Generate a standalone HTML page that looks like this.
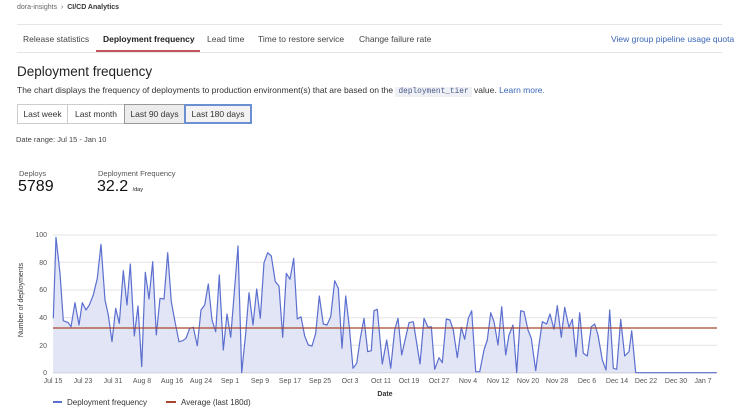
<!DOCTYPE html>
<html><head><meta charset="utf-8"><style>
*{margin:0;padding:0;box-sizing:border-box}
body{width:748px;height:417px;background:#fff;font-family:"Liberation Sans",sans-serif;color:#333;position:relative;overflow:hidden}
.a{position:absolute;white-space:nowrap}
.btn{position:absolute;top:104px;height:20px;border:1px solid #ccc;font-size:8.5px;line-height:18px;text-align:center;background:#fff;color:#333}
</style></head><body>
<div class="a" style="left:17px;top:4px;font-size:7px;color:#666">dora-insights &nbsp;›&nbsp; <b style="color:#333">CI/CD Analytics</b></div>
<div class="a" style="left:17px;top:24px;width:705px;border-top:1px solid #e5e5e5"></div>
<div class="a" style="left:17px;top:52px;width:705px;border-top:1px solid #e5e5e5"></div>
<div class="a" style="left:96px;top:50px;width:104px;height:2px;background:#c2565a"></div>
<div class="a" style="left:23px;top:34px;font-size:8.5px;color:#444">Release statistics</div>
<div class="a" style="left:103px;top:34px;font-size:8.5px;color:#222;font-weight:bold">Deployment frequency</div>
<div class="a" style="left:207px;top:34px;font-size:8.5px;color:#444">Lead time</div>
<div class="a" style="left:258px;top:34px;font-size:8.5px;color:#444">Time to restore service</div>
<div class="a" style="left:359px;top:34px;font-size:8.5px;color:#444">Change failure rate</div>
<div class="a" style="left:611px;top:34px;font-size:8.5px;color:#3a66b8">View group pipeline usage quota</div>
<div class="a" style="left:17px;top:64px;font-size:13.5px;color:#222">Deployment frequency</div>
<div class="a" style="left:17px;top:85px;font-size:8.5px;color:#333">The chart displays the frequency of deployments to production environment(s) that are based on the <span style="font-family:'Liberation Mono',monospace;background:#eef0f5;color:#4a5a8a;padding:1px 3px;font-size:7.8px">deployment_tier</span> value. <span style="color:#3a66b8">Learn more.</span></div>
<div class="btn" style="left:17px;width:51px">Last week</div>
<div class="btn" style="left:67px;width:58px">Last month</div>
<div class="btn" style="left:124px;width:61px;background:#ececec;border-color:#999">Last 90 days</div>
<div class="btn" style="left:184px;width:68px;border:2px solid #6b8fd0;background:#f3f3f3;line-height:16px">Last 180 days</div>
<div class="a" style="left:16px;top:135px;font-size:7.5px;color:#444">Date range: Jul 15 - Jan 10</div>
<div class="a" style="left:19px;top:169px;font-size:7.5px;color:#555">Deploys</div>
<div class="a" style="left:18px;top:178px;font-size:16px;color:#111">5789</div>
<div class="a" style="left:98px;top:169px;font-size:7.5px;color:#555">Deployment Frequency</div>
<div class="a" style="left:97px;top:178px;font-size:16px;color:#111">32.2 <span style="font-size:5.5px">/day</span></div>
<svg class="a" style="left:0;top:0" width="748" height="417">
<g stroke="#e3e3e3" stroke-width="1">
<line x1="53" x2="717" y1="235" y2="235"/><line x1="53" x2="717" y1="262.3" y2="262.3"/><line x1="53" x2="717" y1="290" y2="290"/><line x1="53" x2="717" y1="317.7" y2="317.7"/><line x1="53" x2="717" y1="345.3" y2="345.3"/><line x1="53" x2="717" y1="372.7" y2="372.7" stroke="#bbb"/>
</g>
<g font-size="7" fill="#555" text-anchor="end" font-family="Liberation Sans">
<text x="47" y="237">100</text><text x="47" y="265">80</text><text x="47" y="292">60</text><text x="47" y="320">40</text><text x="47" y="348">20</text><text x="47" y="375">0</text>
</g>
<text transform="translate(23,300) rotate(-90)" font-size="7" fill="#333" text-anchor="middle" font-family="Liberation Sans">Number of deployments</text>
<polygon fill="#dfe2f5" fill-opacity="0.9" points="53,372.7 53.3,318.3 56,237.3 60,273.3 63.3,320.7 68.3,322.7 71,326.7 75,302.7 79,325 82.3,302.7 86,310 89.3,305 93.3,295 97.3,278.3 101,244.3 105,300 108.3,315 112,341.7 115.7,308.3 119.3,323.3 123.3,270.7 127,305 130.3,264 134.3,336 138,306 141.7,366.7 145.3,272.3 149,299 152.7,261.7 156.3,335 160,298.3 164,299 167.7,252.7 171.3,301.7 175,321.7 179,341.7 182.7,340.7 186,338.3 189.7,328.3 193.3,327.3 197.3,345.7 201,310 204.7,305 208.3,284 212,320 215.7,331.7 219.3,275 223.3,350 227,314 230.7,337.3 238,246 241.7,372.7 245.7,333.3 249,292.7 253,325 256.7,289 260.3,318.3 264,262.7 267.7,252.7 271.3,256 275.3,281.7 279,286 282.7,337.3 286.3,273.3 290,279.3 293.7,258.3 297.3,319 301,316.7 304.7,336 308.3,345 312,346 315.7,333.3 319.3,296 323.3,324 327,325 330.7,316.7 334.7,280.7 338.3,288.3 342,348.3 345.7,296 349.3,326.7 353,368.3 356.7,363.3 360.3,338.3 364,318.3 367.7,351.7 371.3,350.7 374,310.7 377.3,309.3 382.3,364 386.7,340 390.7,368.3 394.7,330 398,318.3 401.7,355 409,322.7 413.3,321.7 420,364 424,318.3 428,327.3 431.3,326.7 434.7,369.3 439,357.7 442.3,362.7 446.3,319 450,320 453.3,330 457.3,357.7 461.3,327.3 464.7,339.3 468.3,318.3 471.7,310.7 475.7,371.7 479.7,371.7 484,350 487.3,340 490.7,312.7 494,321.7 498,345 501.7,306.7 505.7,355 509,335 513,325 516.7,372.7 520.7,310.7 524,311.7 528,330 531.3,338.3 535.7,370.7 539,345 542.3,321.7 546.7,324 550,314 554,329.3 557.3,305.7 561.3,337.3 564.7,307.3 569,327.3 572.3,319.3 576,356.7 579.7,312.7 583.3,353.3 587.3,356 591.3,326.7 594.7,324 598,335 602.3,360 606,370 609.7,310 613.3,368.3 616.7,369.3 620.7,319.3 624.7,356 629,351.7 631.7,330.7 635.7,372.7 716.7,372.7"/>
<polyline fill="none" stroke="#5b6fcf" stroke-width="1.2" stroke-linejoin="round" points="53.3,318.3 56,237.3 60,273.3 63.3,320.7 68.3,322.7 71,326.7 75,302.7 79,325 82.3,302.7 86,310 89.3,305 93.3,295 97.3,278.3 101,244.3 105,300 108.3,315 112,341.7 115.7,308.3 119.3,323.3 123.3,270.7 127,305 130.3,264 134.3,336 138,306 141.7,366.7 145.3,272.3 149,299 152.7,261.7 156.3,335 160,298.3 164,299 167.7,252.7 171.3,301.7 175,321.7 179,341.7 182.7,340.7 186,338.3 189.7,328.3 193.3,327.3 197.3,345.7 201,310 204.7,305 208.3,284 212,320 215.7,331.7 219.3,275 223.3,350 227,314 230.7,337.3 238,246 241.7,372.7 245.7,333.3 249,292.7 253,325 256.7,289 260.3,318.3 264,262.7 267.7,252.7 271.3,256 275.3,281.7 279,286 282.7,337.3 286.3,273.3 290,279.3 293.7,258.3 297.3,319 301,316.7 304.7,336 308.3,345 312,346 315.7,333.3 319.3,296 323.3,324 327,325 330.7,316.7 334.7,280.7 338.3,288.3 342,348.3 345.7,296 349.3,326.7 353,368.3 356.7,363.3 360.3,338.3 364,318.3 367.7,351.7 371.3,350.7 374,310.7 377.3,309.3 382.3,364 386.7,340 390.7,368.3 394.7,330 398,318.3 401.7,355 409,322.7 413.3,321.7 420,364 424,318.3 428,327.3 431.3,326.7 434.7,369.3 439,357.7 442.3,362.7 446.3,319 450,320 453.3,330 457.3,357.7 461.3,327.3 464.7,339.3 468.3,318.3 471.7,310.7 475.7,371.7 479.7,371.7 484,350 487.3,340 490.7,312.7 494,321.7 498,345 501.7,306.7 505.7,355 509,335 513,325 516.7,372.7 520.7,310.7 524,311.7 528,330 531.3,338.3 535.7,370.7 539,345 542.3,321.7 546.7,324 550,314 554,329.3 557.3,305.7 561.3,337.3 564.7,307.3 569,327.3 572.3,319.3 576,356.7 579.7,312.7 583.3,353.3 587.3,356 591.3,326.7 594.7,324 598,335 602.3,360 606,370 609.7,310 613.3,368.3 616.7,369.3 620.7,319.3 624.7,356 629,351.7 631.7,330.7 635.7,372.7 716.7,372.7"/>
<line x1="53" x2="717" y1="328" y2="328" stroke="#a8472e" stroke-width="1.3"/>
<g font-size="7" fill="#555" text-anchor="middle" font-family="Liberation Sans">
<text x="53" y="383">Jul 15</text><text x="83" y="383">Jul 23</text><text x="113" y="383">Jul 31</text><text x="142" y="383">Aug 8</text><text x="172" y="383">Aug 16</text><text x="201" y="383">Aug 24</text><text x="230" y="383">Sep 1</text><text x="260" y="383">Sep 9</text><text x="290" y="383">Sep 17</text><text x="320" y="383">Sep 25</text><text x="350" y="383">Oct 3</text><text x="381" y="383">Oct 11</text><text x="409" y="383">Oct 19</text><text x="439" y="383">Oct 27</text><text x="468" y="383">Nov 4</text><text x="498" y="383">Nov 12</text><text x="528" y="383">Nov 20</text><text x="557" y="383">Nov 28</text><text x="587" y="383">Dec 6</text><text x="617" y="383">Dec 14</text><text x="646" y="383">Dec 22</text><text x="676" y="383">Dec 30</text><text x="703" y="383">Jan 7</text>
</g>
<text x="385" y="396" font-size="7" font-weight="bold" fill="#333" text-anchor="middle" font-family="Liberation Sans">Date</text>
<line x1="53" x2="62" y1="402" y2="402" stroke="#5b6fcf" stroke-width="2"/>
<text x="67" y="405" font-size="8" fill="#333" font-family="Liberation Sans">Deployment frequency</text>
<line x1="166" x2="176" y1="402" y2="402" stroke="#a8472e" stroke-width="2"/>
<text x="181" y="405" font-size="8" fill="#333" font-family="Liberation Sans">Average (last 180d)</text>
</svg>
</body></html>
